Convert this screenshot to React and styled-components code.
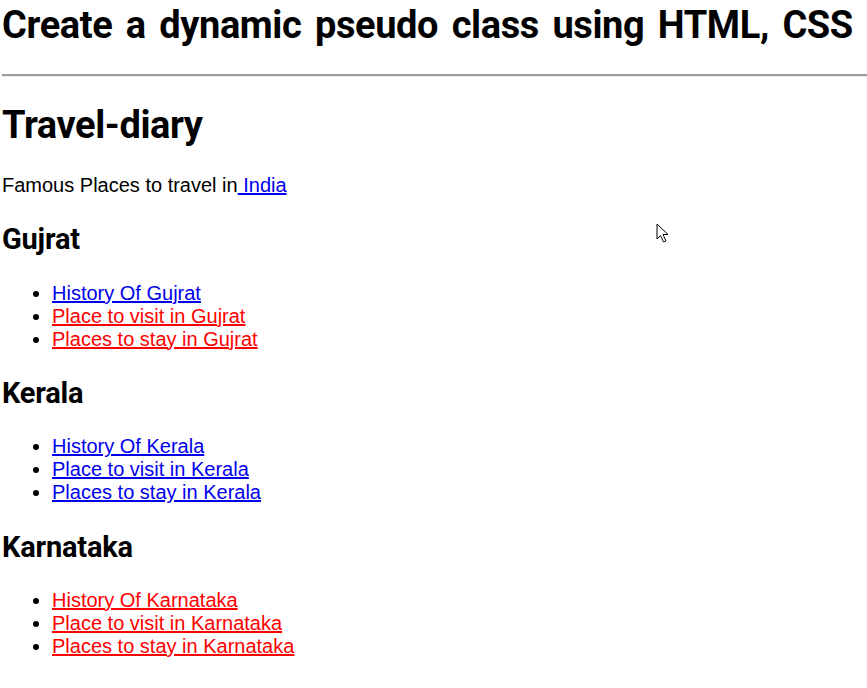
import React from "react";
import styled, { createGlobalStyle } from "styled-components";

const GlobalStyle = createGlobalStyle`
  body {
    margin: 0;
    padding: 3px 0 0 2px;
    background: #fff;
    color: #000;
    font-family: "Liberation Sans", Arial, sans-serif;
    font-size: 20px;
  }
`;

const Page = styled.div`
  position: relative;
`;

const Title = styled.h1`
  font-family: Roboto, "Liberation Sans", sans-serif;
  font-weight: 700;
  font-size: 38px;
  letter-spacing: -0.4px;
  word-spacing: 4.5px;
  margin: 0.7em 0;
`;

const PageTitle = styled(Title)`
  margin-top: 0;
`;

const Rule = styled.hr`
  margin: 0.5em 0;
  border: 0;
  border-top: 2px solid #9a9a9a;
  border-bottom: 1px solid #eee;
`;

const Region = styled.h2`
  font-family: Roboto, "Liberation Sans", sans-serif;
  font-weight: 700;
  font-size: 29px;
  letter-spacing: -0.2px;
  margin: 0.875em 0;
`;

const Intro = styled.p`
  margin: 1em 0;
`;

const List = styled.ul`
  margin: 1em 0;
  padding-left: 50px;
  list-style: disc;
`;

const Link = styled.a`
  color: ${(p) => (p.$visited ? "#ff0000" : "#0000ee")};
  text-decoration: underline;
`;

const Pointer = styled.svg`
  position: absolute;
  left: 654px;
  top: 220px;
`;

const regions = [
  { name: "Gujrat", visited: [false, true, true] },
  { name: "Kerala", visited: [false, false, false] },
  { name: "Karnataka", visited: [true, true, true] }
];

function Section({ name, visited }) {
  const labels = [
    `History Of ${name}`,
    `Place to visit in ${name}`,
    `Places to stay in ${name}`
  ];
  return (
    <>
      <Region>{name}</Region>
      <List>
        {labels.map((label, i) => (
          <li key={label}>
            <Link href="#" $visited={visited[i]}>
              {label}
            </Link>
          </li>
        ))}
      </List>
    </>
  );
}

export default function App() {
  return (
    <Page>
      <GlobalStyle />
      <PageTitle>Create a dynamic pseudo class using HTML, CSS</PageTitle>
      <Rule />
      <Title>Travel-diary</Title>
      <Intro>
        Famous Places to travel in
        <Link href="#"> India</Link>
      </Intro>
      {regions.map((r) => (
        <Section key={r.name} {...r} />
      ))}
      <Pointer width="14" height="22" viewBox="0 0 14 22">
        <path
          d="M1 1 L1 16 L4.5 12.5 L7.5 19 L10 18 L7 11.5 L12 11.5 Z"
          fill="#fff"
          stroke="#000"
          strokeWidth="1"
          strokeLinejoin="round"
        />
      </Pointer>
    </Page>
  );
}
